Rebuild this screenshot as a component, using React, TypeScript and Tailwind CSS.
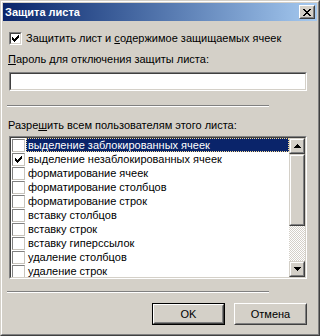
import React from "react";

// Диалог "Защита листа" в классическом стиле Windows

const CHECK = [
  "......#",
  ".....##",
  "#...###",
  "##.###.",
  "#####..",
  ".###...",
  "..#....",
];

function CheckMark() {
  const cells: React.ReactElement[] = [];
  CHECK.forEach((row, y) =>
    row.split("").forEach((c, x) => {
      if (c === "#") cells.push(<rect key={`${x}-${y}`} x={x} y={y} width={1} height={1} fill="#000" />);
    })
  );
  return (
    <svg width="7" height="7" viewBox="0 0 7 7" shapeRendering="crispEdges">
      {cells}
    </svg>
  );
}

function SunkenCheckbox({ checked }: { checked?: boolean }) {
  return (
    <div className="w-[13px] h-[13px] shrink-0 border border-t-[#808080] border-l-[#808080] border-r-white border-b-white">
      <div className="w-full h-full bg-white border border-t-[#404040] border-l-[#404040] border-r-[#d4d0c8] border-b-[#d4d0c8] flex items-center justify-center">
        {checked && <CheckMark />}
      </div>
    </div>
  );
}

function FlatCheckbox({ checked }: { checked?: boolean }) {
  return (
    <div className="w-[13px] h-[13px] shrink-0 bg-white border border-t-[#808080] border-l-[#808080] border-r-[#c8c4bc] border-b-[#c8c4bc] flex items-center justify-center">
      {checked && <CheckMark />}
    </div>
  );
}

function Separator() {
  return <div className="ml-[4px] w-[262px] h-[2px] border-t border-t-[#808080] border-b border-b-white" />;
}

function ScrollButton({ dir }: { dir: "up" | "down" }) {
  return (
    <div className="w-[16px] h-[16px] shrink-0 border border-t-[#d4d0c8] border-l-[#d4d0c8] border-r-[#404040] border-b-[#404040]">
      <div className="w-full h-full bg-[#d4d0c8] border border-t-white border-l-white border-r-[#808080] border-b-[#808080] flex items-center justify-center">
        <svg width="7" height="4" viewBox="0 0 7 4" shapeRendering="crispEdges">
          {dir === "up" ? <path d="M3 0h1v1h1v1h1v1h1v1H0V3h1V2h1V1h1z" fill="#000" /> : <path d="M0 0h7v1H6v1H5v1H4v1H3V3H2V2H1V1H0z" fill="#000" />}
        </svg>
      </div>
    </div>
  );
}

const ROWS = [
  { label: "выделение заблокированных ячеек", selected: true },
  { label: "выделение незаблокированных ячеек", checked: true },
  { label: "форматирование ячеек" },
  { label: "форматирование столбцов" },
  { label: "форматирование строк" },
  { label: "вставку столбцов" },
  { label: "вставку строк" },
  { label: "вставку гиперссылок" },
  { label: "удаление столбцов" },
  { label: "удаление строк" },
];

export default function App() {
  return (
    <div className="w-[320px] h-[336px] bg-[#d4d0c8] font-['Liberation_Sans',Arial,sans-serif] text-[11px] text-black leading-[13px] border border-t-[#d4d0c8] border-l-[#d4d0c8] border-r-[#404040] border-b-[#404040]">
      <div className="w-full h-full border border-t-white border-l-white border-r-[#808080] border-b-[#808080] p-[1px]">
        {/* Заголовок */}
        <div className="h-[18px] flex items-center justify-between bg-gradient-to-r from-[#0a246a] to-[#a6caf0] pl-[2px] pr-[2px]">
          <span className="text-white font-bold text-[11px]">Защита листа</span>
          <div className="w-[16px] h-[14px] border border-t-white border-l-white border-r-[#404040] border-b-[#404040] bg-[#d4d0c8]">
            <div className="w-full h-full border border-t-[#d4d0c8] border-l-[#d4d0c8] border-r-[#808080] border-b-[#808080] flex items-center justify-center">
              <svg width="8" height="7" viewBox="0 0 8 7" shapeRendering="crispEdges">
                <path d="M0 0h2v1h1v1h2V1h1V0h2v1H7v1H6v1H5v1h1v1h1v1h1v1H6V6H5V5H3v1H2v1H0V6h1V5h1V4h1V3H2V2H1V1H0z" fill="#000" />
              </svg>
            </div>
          </div>
        </div>

        {/* Тело */}
        <div className="flex flex-col">
          <div className="flex items-center gap-[4px] ml-[6px] mt-[11px]">
            <SunkenCheckbox checked />
            <span>
              Защитить лист и <span className="underline">с</span>одержимое защищаемых ячеек
            </span>
          </div>

          <div className="ml-[5px] mt-[8px]">
            <span className="underline">П</span>ароль для отключения защиты листа:
          </div>

          <div className="ml-[6px] mt-[6px] w-[298px] h-[19px] border border-t-[#808080] border-l-[#808080] border-r-white border-b-white">
            <div className="w-full h-full bg-white border border-t-[#404040] border-l-[#404040] border-r-[#d4d0c8] border-b-[#d4d0c8]" />
          </div>

          <div className="mt-[14px]">
            <Separator />
          </div>

          <div className="ml-[5px] mt-[12px]">
            Разре<span className="underline">ш</span>ить всем пользователям этого листа:
          </div>

          {/* Список */}
          <div className="ml-[6px] mt-[4px] w-[298px] h-[143px] border border-t-[#808080] border-l-[#808080] border-r-white border-b-white">
            <div className="w-full h-full bg-white border border-t-[#404040] border-l-[#404040] border-r-[#d4d0c8] border-b-[#d4d0c8] flex">
              <div className="flex-1 overflow-hidden">
                {ROWS.map((r) => (
                  <div key={r.label} className="h-[14px] flex items-center pl-[1px]">
                    <FlatCheckbox checked={r.checked} />
                    <div
                      className={
                        r.selected
                          ? "ml-[1px] flex-1 h-[14px] flex items-center pl-[1px] bg-[#0a246a] text-white border border-dotted border-[#f5db95]"
                          : "ml-[1px] flex-1 h-[14px] flex items-center pl-[2px]"
                      }
                    >
                      {r.label}
                    </div>
                  </div>
                ))}
              </div>
              <div className="w-[16px] flex flex-col">
                <ScrollButton dir="up" />
                <div className="h-[72px] border border-t-[#d4d0c8] border-l-[#d4d0c8] border-r-[#404040] border-b-[#404040]">
                  <div className="w-full h-full bg-[#d4d0c8] border border-t-white border-l-white border-r-[#808080] border-b-[#808080]" />
                </div>
                <div className="flex-1 bg-[repeating-conic-gradient(#d4d0c8_0_25%,#ffffff_0_50%)] bg-[length:2px_2px]" />
                <ScrollButton dir="down" />
              </div>
            </div>
          </div>

          <div className="mt-[12px]">
            <Separator />
          </div>

          {/* Кнопки */}
          <div className="mt-[10px] flex justify-end gap-[9px] pr-[10px]">
            <div className="w-[73px] h-[22px] border border-black">
              <div className="w-full h-full border border-t-white border-l-white border-r-[#404040] border-b-[#404040]">
                <div className="w-full h-full border border-t-[#d4d0c8] border-l-[#d4d0c8] border-r-[#808080] border-b-[#808080] flex items-center justify-center">
                  OK
                </div>
              </div>
            </div>
            <div className="w-[73px] h-[22px] border border-t-white border-l-white border-r-[#404040] border-b-[#404040]">
              <div className="w-full h-full border border-t-[#d4d0c8] border-l-[#d4d0c8] border-r-[#808080] border-b-[#808080] flex items-center justify-center">
                Отмена
              </div>
            </div>
          </div>
        </div>
      </div>
    </div>
  );
}
